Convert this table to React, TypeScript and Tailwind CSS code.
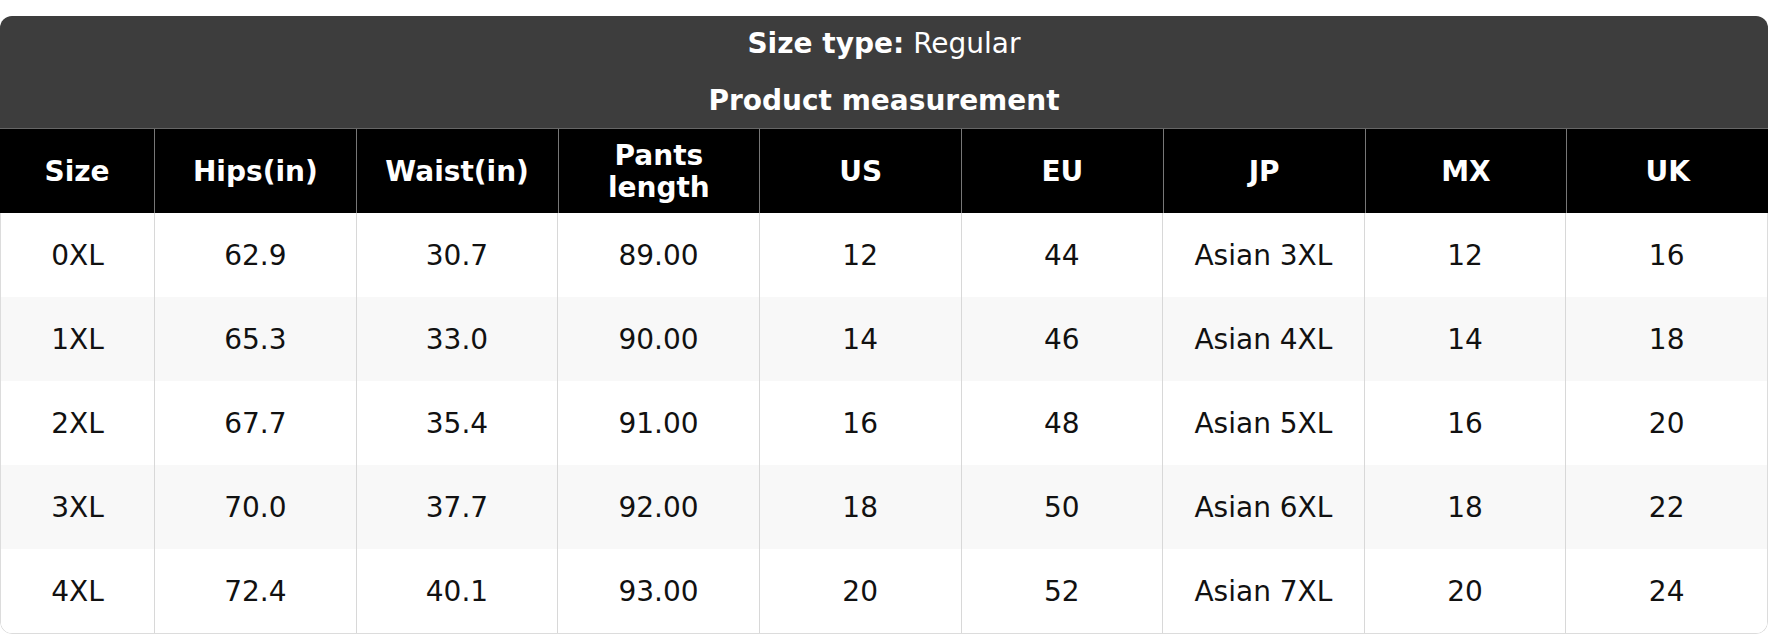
import React from "react";

const headers = ["Size", "Hips(in)", "Waist(in)", "Pants\nlength", "US", "EU", "JP", "MX", "UK"];
const rows = [
  ["0XL", "62.9", "30.7", "89.00", "12", "44", "Asian 3XL", "12", "16"],
  ["1XL", "65.3", "33.0", "90.00", "14", "46", "Asian 4XL", "14", "18"],
  ["2XL", "67.7", "35.4", "91.00", "16", "48", "Asian 5XL", "16", "20"],
  ["3XL", "70.0", "37.7", "92.00", "18", "50", "Asian 6XL", "18", "22"],
  ["4XL", "72.4", "40.1", "93.00", "20", "52", "Asian 7XL", "20", "24"],
];

export default function App() {
  return (
    <div className="w-[1770px] h-[636px] bg-white pt-4 font-['DejaVu_Sans',sans-serif]">
      <div className="w-[1768px] rounded-xl overflow-hidden">
        <div className="bg-[#3d3d3d] text-white text-[28px] text-center">
          <div className="h-14 flex items-center justify-center">
            <span className="font-bold">Size type:</span>
            <span className="ml-[9px]">Regular</span>
          </div>
          <div className="h-14 pt-[2px] flex items-center justify-center font-bold">Product measurement</div>
        </div>
        <div className="grid grid-cols-[154px_repeat(8,1fr)] border-t border-[#666] bg-black">
          {headers.map((h, i) => (
            <div
              key={i}
              className={`h-[84px] pt-[2px] flex items-center justify-center text-center text-white font-bold text-[28px] leading-[32px] whitespace-pre-line ${i > 0 ? "border-l border-[#777]" : ""}`}
            >
              {h}
            </div>
          ))}
        </div>
        <div className="border-x border-b border-[#dcdcdc] rounded-b-xl overflow-hidden">
          {rows.map((r, ri) => (
            <div
              key={ri}
              className={`grid grid-cols-[153px_repeat(8,1fr)] ${ri % 2 === 1 ? "bg-[#f8f8f8]" : "bg-white"}`}
            >
              {r.map((c, ci) => (
                <div
                  key={ci}
                  className={`h-[84px] pt-[2px] flex items-center justify-center text-[28px] text-[#111] ${ci > 0 ? "border-l border-[#d8d8d8]" : ""}`}
                >
                  {c}
                </div>
              ))}
            </div>
          ))}
        </div>
      </div>
    </div>
  );
}
